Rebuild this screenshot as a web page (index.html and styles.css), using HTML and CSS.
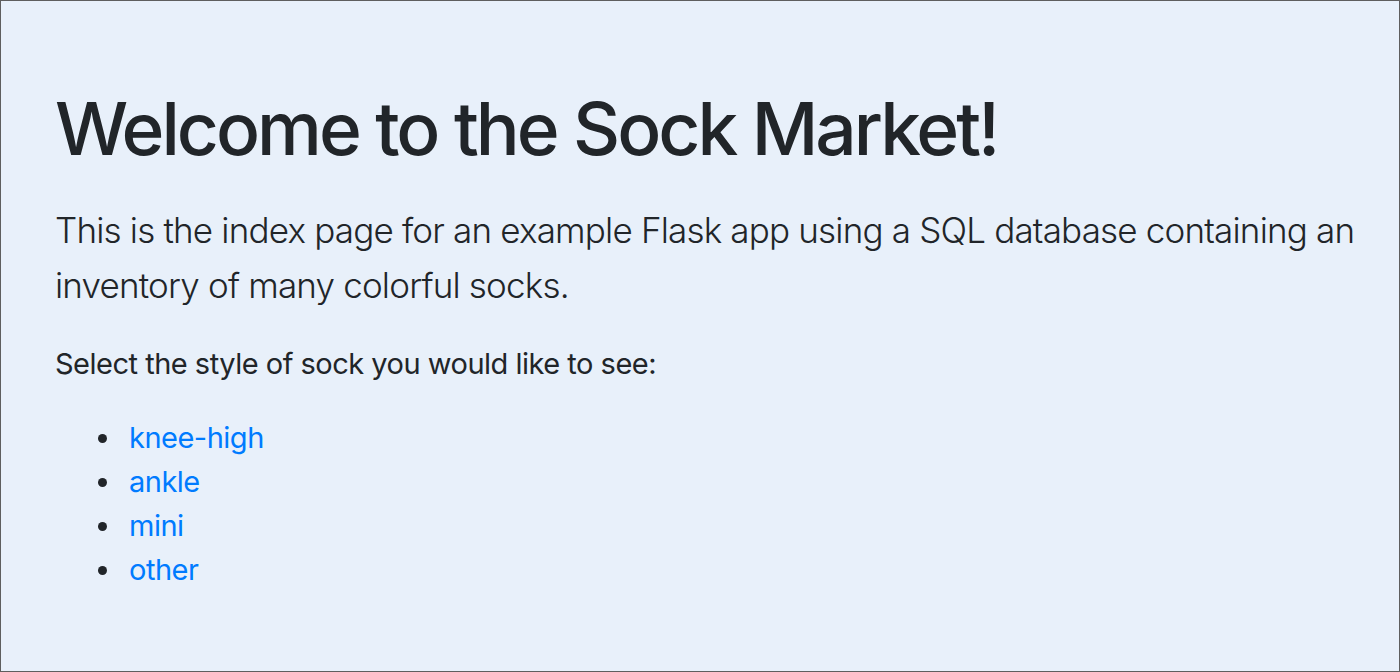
FILE: index.html
```html
<!DOCTYPE html>
<html lang="en">
<head>
<meta charset="utf-8">
<title>Sock Market</title>
<link rel="stylesheet" href="styles.css">
</head>
<body>
<div class="frame">
  <div class="container">
    <h1 class="title">Welcome to the Sock Market!</h1>
    <p class="lead">This is the index page for an example Flask app using a SQL database containing an inventory of many colorful socks.</p>
    <p class="prompt">Select the style of sock you would like to see:</p>
    <ul class="styles">
      <li><a href="#">knee-high</a></li>
      <li><a href="#">ankle</a></li>
      <li><a href="#">mini</a></li>
      <li><a href="#">other</a></li>
    </ul>
  </div>
</div>
</body>
</html>
```
FILE: styles.css
```css
html, body {
  margin: 0;
  padding: 0;
}
body {
  font-family: Inter, "Liberation Sans", sans-serif;
  color: #212529;
  font-size: 29px;
  line-height: 1.5;
  letter-spacing: -0.5px;
}
.frame {
  box-sizing: border-box;
  width: 1400px;
  height: 672px;
  border: 1px solid #5e5e5e;
  background: #e8f0fa;
  overflow: hidden;
}
.container {
  padding: 84px 30px 0 54px;
}
.title {
  font-size: 73px;
  font-weight: 500;
  line-height: 1.2;
  letter-spacing: -3px;
  margin: 0 0 30px;
}
.lead {
  font-size: 35px;
  font-weight: 300;
  line-height: 55px;
  letter-spacing: -0.82px;
  margin: 0 0 29px;
}
.prompt {
  margin: 0 0 31px;
}
.styles {
  margin: 0;
  padding-left: 74px;
  list-style: none;
}
.styles li {
  display: flex;
  align-items: center;
  height: 44px;
}
.styles li::before {
  content: "";
  flex: none;
  width: 9px;
  height: 9px;
  border-radius: 50%;
  background: #212529;
  margin-left: -31px;
  margin-right: 22px;
  margin-top: 1px;
}
.styles a {
  color: #007bff;
  text-decoration: none;
}
```
